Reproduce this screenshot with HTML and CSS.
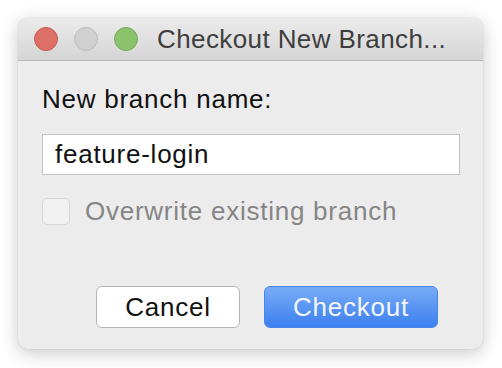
FILE: index.html
```html
<!DOCTYPE html>
<html lang="en">
<head>
    <meta charset="UTF-8">
    <title>Checkout New Branch</title>
    <link rel="stylesheet" href="styles.css">
</head>
<body>
    <div class="window">
        <div class="titlebar">
            <div class="lights">
                <span class="light close"></span>
                <span class="light min"></span>
                <span class="light zoom"></span>
            </div>
            <div class="title">Checkout New Branch...</div>
        </div>
        <div class="content">
            <label class="field-label" for="branch">New branch name:</label>
            <input type="text" id="branch" class="text-input" value="feature-login">
            <div class="check-row">
                <span class="checkbox"></span>
                <span class="check-label">Overwrite existing branch</span>
            </div>
            <div class="buttons">
                <button class="btn cancel">Cancel</button>
                <button class="btn primary">Checkout</button>
            </div>
        </div>
    </div>
</body>
</html>
```

FILE: styles.css
```css
* {
    margin: 0;
    padding: 0;
    box-sizing: border-box;
}

body {
    background: #fff;
    font-family: 'Liberation Sans', Arial, sans-serif;
    padding: 18px;
    width: 502px;
    height: 368px;
    overflow: hidden;
}

.window {
    width: 465px;
    height: 331px;
    background: #ececec;
    border-radius: 9px;
    box-shadow: 0 4px 18px rgba(0, 0, 0, 0.22), 0 0 1px rgba(0, 0, 0, 0.25);
    overflow: hidden;
    display: flex;
    flex-direction: column;
}

.titlebar {
    height: 43px;
    background: linear-gradient(#ebebeb, #d5d5d5);
    border-bottom: 1px solid #b9b9b9;
    display: flex;
    align-items: center;
    padding-left: 16px;
}

.lights {
    display: flex;
    gap: 16px;
}

.light {
    width: 24px;
    height: 24px;
    border-radius: 50%;
}

.light.close {
    background: #dc6f66;
    border: 1px solid #c65a51;
}

.light.min {
    background: #d0d0d0;
    border: 1px solid #bdbdbd;
}

.light.zoom {
    background: #8cc26c;
    border: 1px solid #74a857;
}

.title {
    margin-left: 19px;
    font-size: 26px;
    letter-spacing: 0.4px;
    color: #3e3e3e;
}

.content {
    padding: 23px 23px 0 24px;
    display: flex;
    flex-direction: column;
    letter-spacing: 0.75px;
}

.field-label {
    font-size: 26px;
    color: #111;
    line-height: 30px;
}

.text-input {
    margin-top: 20px;
    height: 41px;
    width: 418px;
    border: 1px solid #c2c2c2;
    background: #fff;
    font-family: inherit;
    font-size: 26px;
    letter-spacing: 0.75px;
    color: #111;
    padding: 0 12px;
    outline: none;
}

.check-row {
    margin-top: 21px;
    display: flex;
    align-items: center;
    gap: 15px;
}

.checkbox {
    width: 28px;
    height: 27px;
    border: 1px solid #d6d6d6;
    border-radius: 5px;
    background: #f1f1f1;
}

.check-label {
    font-size: 26px;
    color: #858585;
}

.buttons {
    margin-top: 59px;
    display: flex;
    gap: 24px;
    padding-left: 54px;
}

.btn {
    height: 42px;
    border-radius: 6px;
    font-family: inherit;
    font-size: 26px;
    letter-spacing: 0.75px;
}

.btn.cancel {
    width: 144px;
    background: #fff;
    border: 1px solid #b5b5b5;
    color: #111;
}

.btn.primary {
    width: 174px;
    background: linear-gradient(#78acf6, #3c7ff0);
    border: 1px solid #4a86ea;
    color: #f4f6fb;
}
```
